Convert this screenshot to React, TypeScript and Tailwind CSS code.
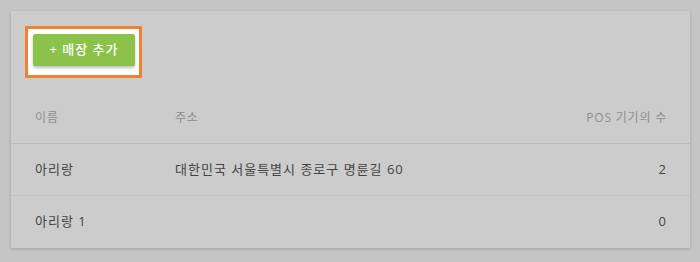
import React from "react";

const font = { fontFamily: '"Open Sans", "Noto Sans CJK KR", sans-serif' };

export default function App() {
  const rows = [
    { name: "아리랑", addr: "대한민국 서울특별시 종로구 명륜길 60", count: 2 },
    { name: "아리랑 1", addr: "", count: 0 },
  ];
  return (
    <div className="w-[700px] h-[262px] bg-[#c5c5c5] pt-[11px] pl-[11px]" style={font}>
      <div className="w-[679px] h-[237px] bg-[#cccccc] shadow-[0_1px_3px_rgba(0,0,0,0.2)] flex flex-col">
        <div className="pt-[15px] pl-[14px]">
          <div className="inline-flex border-[3px] border-[#f08231] bg-white pt-[5px] pl-[5px] pr-[4px] pb-[9px]">
            <button className="w-[102px] h-[32px] rounded-[2px] bg-[#8bc34a] text-white text-[13px] font-medium tracking-[1px] shadow-[0_2px_3px_rgba(0,0,0,0.25)] flex items-center justify-center">
              + 매장 추가
            </button>
          </div>
        </div>
        <div className="mt-[14px] h-[52px] flex items-center px-[24px] border-b border-[#bcbcbc] text-[12px] tracking-[0.8px] text-[#8e8e8e]">
          <div className="w-[140px]">이름</div>
          <div className="flex-1">주소</div>
          <div className="text-right mr-[-1px]">POS 기기의 수</div>
        </div>
        {rows.map((r, i) => (
          <div
            key={i}
            className={`h-[52px] flex items-center px-[24px] text-[13px] tracking-[1px] text-[#444444] ${i === 0 ? "border-b border-[#c0c0c0]" : ""}`}
          >
            <div className="w-[140px]">{r.name}</div>
            <div className="flex-1">{r.addr}</div>
            <div className="text-right mr-[-1px]">{r.count}</div>
          </div>
        ))}
      </div>
    </div>
  );
}
